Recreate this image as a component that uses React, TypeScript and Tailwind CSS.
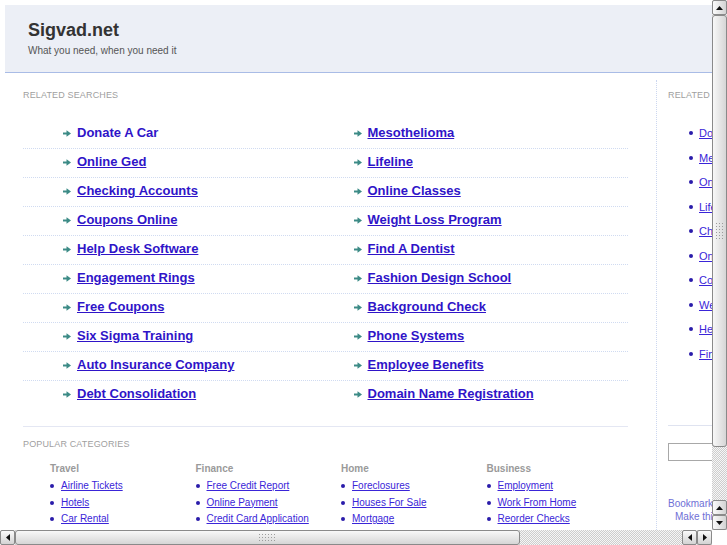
import React from "react";

const mainRows: [string, string][] = [
  ["Donate A Car", "Mesothelioma"],
  ["Online Ged", "Lifeline"],
  ["Checking Accounts", "Online Classes"],
  ["Coupons Online", "Weight Loss Program"],
  ["Help Desk Software", "Find A Dentist"],
  ["Engagement Rings", "Fashion Design School"],
  ["Free Coupons", "Background Check"],
  ["Six Sigma Training", "Phone Systems"],
  ["Auto Insurance Company", "Employee Benefits"],
  ["Debt Consolidation", "Domain Name Registration"],
];

const sideLinks = [
  "Donate A Car",
  "Mesothelioma",
  "Online Ged",
  "Lifeline",
  "Checking Accounts",
  "Online Classes",
  "Coupons Online",
  "Weight Loss Program",
  "Help Desk Software",
  "Find A Dentist",
];

const categories: { title: string; links: string[] }[] = [
  { title: "Travel", links: ["Airline Tickets", "Hotels", "Car Rental"] },
  { title: "Finance", links: ["Free Credit Report", "Online Payment", "Credit Card Application"] },
  { title: "Home", links: ["Foreclosures", "Houses For Sale", "Mortgage"] },
  { title: "Business", links: ["Employment", "Work From Home", "Reorder Checks"] },
];

function Arrow() {
  return (
    <svg width="8" height="7" viewBox="0 0 8 7" className="shrink-0">
      <path d="M0 2.5h4.5v2H0z" fill="#3c8b86" />
      <path d="M3.5 0.2L8 3.5L3.5 6.8z" fill="#3c8b86" />
    </svg>
  );
}

function Dot() {
  return <span className="block w-[4px] h-[4px] rounded-full bg-[#2a1caa] shrink-0" />;
}

function Btn({ dir }: { dir: "up" | "down" | "left" | "right" }) {
  const vertical = dir === "up" || dir === "down";
  const paths: Record<string, string> = {
    up: "M0 5L3.5 1L7 5z",
    down: "M0 1L3.5 5L7 1z",
    left: "M5 0L1 3.5L5 7z",
    right: "M1 0L5 3.5L1 7z",
  };
  return (
    <div
      className={
        "w-[15px] h-[15px] shrink-0 border border-[#8a8a8a] rounded-[2px] flex items-center justify-center " +
        (vertical
          ? "bg-gradient-to-r from-[#fbfbfb] to-[#d3d3d3]"
          : "bg-gradient-to-b from-[#fbfbfb] to-[#d3d3d3]")
      }
    >
      <svg width={vertical ? 7 : 6} height={vertical ? 6 : 7} viewBox={vertical ? "0 0 7 6" : "0 0 6 7"}>
        <path d={paths[dir]} fill="#111" />
      </svg>
    </div>
  );
}

const track =
  "bg-[repeating-conic-gradient(#cdcdcd_0%_25%,#f6f6f6_0%_50%)] bg-[length:2px_2px]";
const grip =
  "bg-[radial-gradient(circle,#9c9c9c_0.8px,transparent_0.9px)] bg-[length:3px_3px]";

export default function App() {
  return (
    <div className="w-[727px] h-[545px] flex flex-col overflow-hidden bg-white font-['Liberation_Sans',Arial,sans-serif]">
      <div className="flex h-[530px]">
        {/* viewport */}
        <div className="w-[712px] h-[530px] overflow-hidden">
          <div className="w-[942px] pt-[5px] pl-[5px] pr-[5px]">
            {/* header */}
            <div className="h-[68px] border-b border-[#a9bce6] bg-[#eceff6] pl-[23px] pt-[14px]">
              <div className="text-[18px] leading-[22px] font-bold text-[#333]">Sigvad.net</div>
              <div className="mt-[3px] text-[10px] leading-[13px] text-[#555]">What you need, when you need it</div>
            </div>

            {/* body */}
            <div className="flex mt-[7px]">
              {/* left */}
              <div className="w-[651px] pl-[18px] pt-[9px] shrink-0">
                <div className="text-[9px] leading-[12px] tracking-[0.15px] text-[#a0a0a0] uppercase">
                  Related Searches
                </div>
                <div className="mt-[19px] w-[605px]">
                  {mainRows.map((row, i) => (
                    <div
                      key={i}
                      className={
                        "grid grid-cols-2 h-[29px] border-b border-dotted " +
                        (i === mainRows.length - 1 ? "border-transparent" : "border-[#d0dbf1]")
                      }
                    >
                      {row.map((t, j) => (
                        <div
                          key={j}
                          className={"h-[26px] flex items-center gap-[6px] " + (j === 0 ? "pl-[40px]" : "pl-[28px]")}
                        >
                          <Arrow />
                          <a
                            className={
                              "text-[13px] leading-[16px] font-bold text-[#2f14c8] " +
                              (i === 0 && j === 0 ? "no-underline" : "underline")
                            }
                          >
                            {t}
                          </a>
                        </div>
                      ))}
                    </div>
                  ))}
                </div>
                <div className="mt-[16px] h-px w-[605px] bg-[#e4e7f3]" />
                <div className="mt-[11px] text-[9px] leading-[12px] tracking-[0.15px] text-[#a0a0a0] uppercase">
                  Popular Categories
                </div>
                <div className="mt-[12px] ml-[27px] w-[582px] grid grid-cols-4">
                  {categories.map((c) => (
                    <div key={c.title}>
                      <div className="text-[10px] leading-[13px] font-bold text-[#9a9a9a]">{c.title}</div>
                      <div className="mt-[3px]">
                        {c.links.map((l) => (
                          <div key={l} className="flex items-center gap-[7px] h-[16.5px]">
                            <Dot />
                            <a className="text-[10px] leading-[16.5px] text-[#3a25d8] underline">{l}</a>
                          </div>
                        ))}
                      </div>
                    </div>
                  ))}
                </div>
                <div className="h-[60px]" />
              </div>

              {/* right */}
              <div className="flex-1 border-l border-dotted border-[#ccd7f0] pl-[11px] pt-[9px]">
                <div className="text-[9px] leading-[12px] tracking-[0.15px] text-[#a0a0a0] uppercase whitespace-nowrap">
                  Related Searches
                </div>
                <div className="mt-[20px]">
                  {sideLinks.map((l) => (
                    <div key={l} className="h-[24.5px] flex items-center gap-[6px] pl-[21px]">
                      <Dot />
                      <a className="text-[11px] leading-[14px] text-[#3a25d8] underline whitespace-nowrap">{l}</a>
                    </div>
                  ))}
                </div>
                <div className="mt-[59px] h-px bg-[#dfe3f0]" />
                <div className="mt-[17px] h-[18px] w-[200px] border border-[#a8a8a8] bg-white" />
                <div className="mt-[36px] text-[10px] leading-[13px] text-[#6f6fd6] whitespace-nowrap">
                  Bookmark this page
                </div>
                <div className="ml-[7px] text-[10px] leading-[13px] text-[#6f6fd6] whitespace-nowrap">
                  Make this my homepage
                </div>
              </div>
            </div>
          </div>
        </div>

        {/* vertical scrollbar */}
        <div className={"w-[15px] h-[530px] flex flex-col " + track}>
          <Btn dir="up" />
          <div className="h-[432px] shrink-0 border border-[#8a8a8a] rounded-[3px] bg-gradient-to-r from-[#f8f8f8] to-[#d6d6d6] flex flex-col items-center">
            <div className={"mt-[206px] w-[9px] h-[18px] " + grip} />
          </div>
          <div className="flex-1" />
          <Btn dir="up" />
          <Btn dir="down" />
        </div>
      </div>

      {/* bottom row */}
      <div className="flex h-[15px]">
        <div className={"w-[712px] h-[15px] flex " + track}>
          <Btn dir="left" />
          <div className="w-[505px] shrink-0 border border-[#8a8a8a] rounded-[3px] bg-gradient-to-b from-[#f8f8f8] to-[#d6d6d6] flex items-center">
            <div className={"ml-[242px] w-[18px] h-[9px] " + grip} />
          </div>
          <div className="flex-1" />
          <Btn dir="left" />
          <Btn dir="right" />
        </div>
        <div className="w-[15px] h-[15px] bg-white" />
      </div>
    </div>
  );
}
